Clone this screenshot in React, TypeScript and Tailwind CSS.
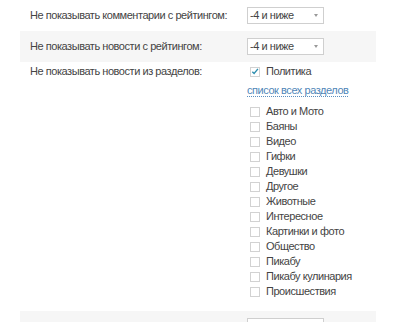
import React from "react";

const items = [
  "Авто и Мото",
  "Баяны",
  "Видео",
  "Гифки",
  "Девушки",
  "Другое",
  "Животные",
  "Интересное",
  "Картинки и фото",
  "Общество",
  "Пикабу",
  "Пикабу кулинария",
  "Происшествия",
];

function Select({ value }: { value: string }) {
  return (
    <div className="relative flex h-[17px] w-[77px] items-center border border-[#cfcfcf] bg-white pl-[2px] text-[11px] text-[#444]">
      <span>{value}</span>
      <span className="absolute right-[5px] top-[6px] h-0 w-0 border-x-[2px] border-t-[3px] border-x-transparent border-t-[#999]" />
    </div>
  );
}

function Box({ checked }: { checked?: boolean }) {
  return (
    <div className="flex h-[10px] w-[10px] items-center justify-center border border-[#d2d2d2] bg-white">
      {checked && (
        <svg width="9" height="9" viewBox="0 0 9 9">
          <path d="M1.5 4.8 L3.5 6.8 L7.8 1.5" stroke="#2f8fb0" strokeWidth="1.6" fill="none" />
        </svg>
      )}
    </div>
  );
}

export default function App() {
  return (
    <div
      className="h-[322px] w-[400px] overflow-hidden bg-white tracking-[-0.45px] text-[#444]"
      style={{ fontFamily: "'Liberation Sans', Arial, sans-serif" }}
    >
      <div className="mx-[20px] w-[356px]">
        <div className="flex h-[31px] items-center">
          <div className="w-[227px] whitespace-nowrap pl-[10px] text-[11px]">Не показывать комментарии с рейтингом:</div>
          <Select value="-4 и ниже" />
        </div>
        <div className="flex h-[31px] items-center bg-[#f6f6f6]">
          <div className="w-[227px] whitespace-nowrap pl-[10px] text-[11px]">Не показывать новости с рейтингом:</div>
          <Select value="-4 и ниже" />
        </div>
        <div className="flex pt-[2px]">
          <div className="w-[227px] whitespace-nowrap pl-[10px] pt-[1px] text-[11px] leading-[13px]">
            Не показывать новости из разделов:
          </div>
          <div className="flex flex-col">
            <div className="flex h-[15px] items-center gap-[6px] pl-[3px] text-[11px]">
              <Box checked />
              <span>Политика</span>
            </div>
            <div className="mt-[3px] h-[15px] text-[11px]">
              <span className="border-b border-dotted border-[#5a8fc0] text-[#4f86b8]">
                список всех разделов
              </span>
            </div>
            <div className="mt-[7px] flex flex-col">
              {items.map((it) => (
                <div key={it} className="flex h-[15px] items-center gap-[6px] pl-[3px] text-[11px]">
                  <Box />
                  <span>{it}</span>
                </div>
              ))}
            </div>
          </div>
        </div>
        <div className="mt-[12px] flex h-[31px] items-start bg-[#f6f6f6] pt-[7px]">
          <div className="w-[227px] whitespace-nowrap pl-[10px] text-[11px]">Количество новостей на странице:</div>
          <Select value="20" />
        </div>
      </div>
    </div>
  );
}
